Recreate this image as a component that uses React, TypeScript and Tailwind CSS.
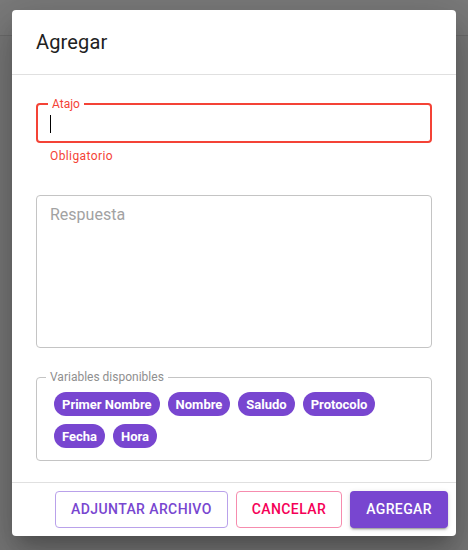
import React from "react";

const chipsRow1 = ["Primer Nombre", "Nombre", "Saludo", "Protocolo"];
const chipsRow2 = ["Fecha", "Hora"];

function Chip({ label }: { label: string }) {
  return (
    <span className="inline-flex h-[24px] items-center rounded-full bg-[#7846d0] px-[8px] text-[13px] font-bold leading-none text-white">
      {label}
    </span>
  );
}

export default function App() {
  return (
    <div
      className="relative h-[550px] w-[468px] overflow-hidden bg-[#777777]"
      style={{ fontFamily: "Roboto, 'Noto Sans', sans-serif" }}
    >
      <div className="h-[36px] border-b border-[#6b6b6b] bg-[#7a7a7a]" />

      <div className="absolute left-[12px] top-[10px] flex h-[526px] w-[444px] flex-col rounded-[4px] bg-white shadow-[0_11px_15px_-7px_rgba(0,0,0,0.2),0_24px_38px_3px_rgba(0,0,0,0.14),0_9px_46px_8px_rgba(0,0,0,0.12)]">
        {/* Title */}
        <div className="flex h-[65px] items-center border-b border-[#e0e0e0] px-[24px] pb-[1px]">
          <h2 className="text-[20px] font-normal leading-[32px] tracking-[0.15px] text-[#212121]">
            Agregar
          </h2>
        </div>

        {/* Content */}
        <div className="flex flex-1 flex-col px-[24px]">
          {/* Atajo */}
          <div className="relative mt-[28px] h-[40px] rounded-[4px] border-2 border-[#f44336]">
            <span className="absolute left-[10px] top-[-8px] bg-white px-[4px] text-[12px] leading-[14px] text-[#f44336]">
              Atajo
            </span>
            <span className="absolute left-[12px] top-[10px] h-[18px] w-[1px] bg-black" />
          </div>
          <div className="mt-[3px] px-[14px] text-[12px] leading-[20px] tracking-[0.4px] text-[#f44336]">
            Obligatorio
          </div>

          {/* Respuesta */}
          <div className="mt-[29px] h-[153px] rounded-[4px] border border-[#c4c4c4] px-[13px] pt-[7px]">
            <span className="text-[16px] leading-[19px] text-[#a2a2a2]">Respuesta</span>
          </div>

          {/* Variables */}
          <div className="relative mt-[29px] h-[84px] rounded-[4px] border border-[#c4c4c4] px-[17px] pt-[14px]">
            <span className="absolute left-[9px] top-[-8px] bg-white px-[4px] text-[12px] leading-[14px] text-[#8f8f8f]">
              Variables disponibles
            </span>
            <div className="flex flex-col gap-[8px]">
              <div className="flex gap-[8px]">
                {chipsRow1.map((c) => (
                  <Chip key={c} label={c} />
                ))}
              </div>
              <div className="flex gap-[8px]">
                {chipsRow2.map((c) => (
                  <Chip key={c} label={c} />
                ))}
              </div>
            </div>
          </div>
        </div>

        {/* Footer */}
        <div className="flex items-center justify-end gap-[8px] border-t border-[#e0e0e0] p-[8px]">
          <button className="flex h-[37px] items-center rounded-[4px] border border-[#b9a1ea] px-[15px] text-[14px] font-medium uppercase tracking-[0.4px] text-[#7846d0]">
            Adjuntar archivo
          </button>
          <button className="flex h-[37px] items-center rounded-[4px] border border-[#f68cae] px-[15px] text-[14px] font-medium uppercase tracking-[0.4px] text-[#f50057]">
            Cancelar
          </button>
          <button className="flex h-[37px] items-center rounded-[4px] bg-[#7846d0] px-[16px] text-[14px] font-medium uppercase tracking-[0.4px] text-white shadow-[0_3px_1px_-2px_rgba(0,0,0,0.2),0_2px_2px_0_rgba(0,0,0,0.14),0_1px_5px_0_rgba(0,0,0,0.12)]">
            Agregar
          </button>
        </div>
      </div>
    </div>
  );
}
